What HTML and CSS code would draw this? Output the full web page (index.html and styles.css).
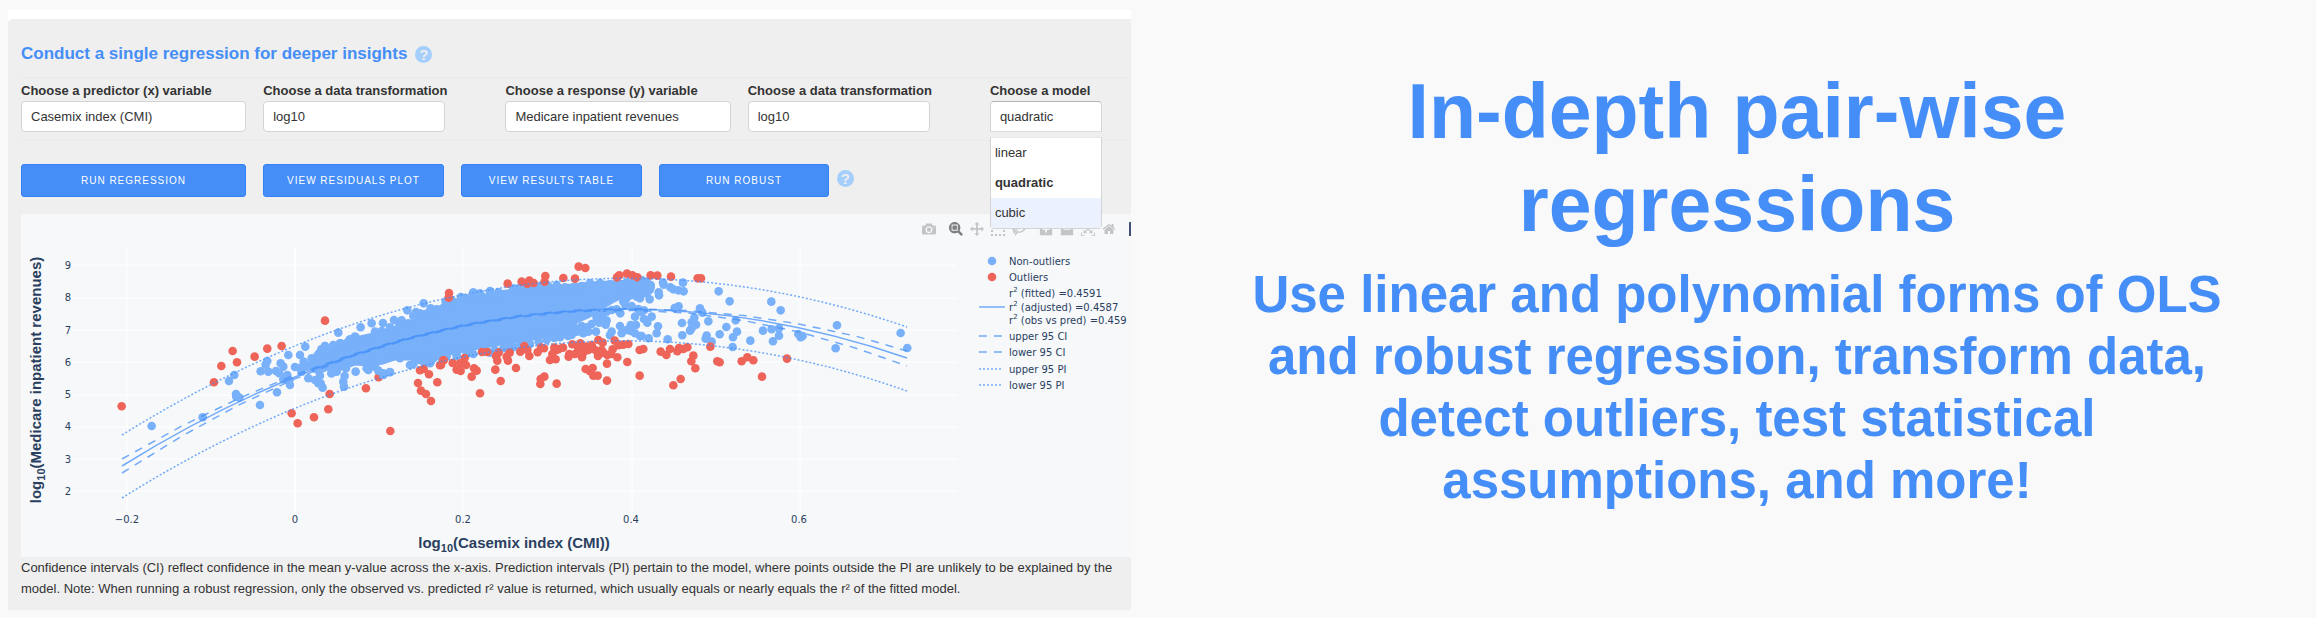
FILE: index.html
```html
<!DOCTYPE html>
<html lang="en">
<head>
<meta charset="utf-8">
<title>In-depth pair-wise regressions</title>
<link rel="stylesheet" href="styles.css">
</head>
<body>
<main class="split">
  <div class="demo">
    <section class="panel">
      <h2 class="panel-title">Conduct a single regression for deeper insights <button class="help" type="button" aria-label="Help">?</button></h2>
      <form class="fields">
        <div class="pair">
          <div class="field">
            <label for="xvar">Choose a predictor (x) variable</label>
            <select id="xvar"><option>Casemix index (CMI)</option></select>
          </div>
          <div class="field">
            <label for="xtrans">Choose a data transformation</label>
            <select id="xtrans"><option>log10</option></select>
          </div>
        </div>
        <div class="pair">
          <div class="field">
            <label for="yvar">Choose a response (y) variable</label>
            <select id="yvar"><option>Medicare inpatient revenues</option></select>
          </div>
          <div class="field">
            <label for="ytrans">Choose a data transformation</label>
            <select id="ytrans"><option>log10</option></select>
          </div>
        </div>
        <div class="field model">
          <label for="model">Choose a model</label>
          <select id="model" class="open"><option>quadratic</option></select>
          <ul class="menu" role="listbox" aria-label="Models">
            <li role="option">linear</li>
            <li role="option" class="chosen" aria-selected="true">quadratic</li>
            <li role="option" class="hover">cubic</li>
          </ul>
        </div>
      </form>
      <div class="actions">
        <button class="btn" type="button">Run regression</button>
        <button class="btn" type="button">View residuals plot</button>
        <button class="btn" type="button">View results table</button>
        <div class="last">
          <button class="btn" type="button">Run robust</button>
          <button class="help" type="button" aria-label="Help">?</button>
        </div>
      </div>
      <div class="chart">
        <div class="modebar">
          <div class="tools"><svg viewBox="0 0 1000 1000"><path transform="matrix(1 0 0 -1 0 850)" d="m500 450c-83 0-150-67-150-150 0-83 67-150 150-150 83 0 150 67 150 150 0 83-67 150-150 150z m400 150h-120c-16 0-34 13-39 29l-31 93c-6 15-23 28-40 28h-340c-16 0-34-13-39-28l-31-94c-6-15-23-28-40-28h-120c-55 0-100-45-100-100v-450c0-55 45-100 100-100h800c55 0 100 45 100 100v450c0 55-45 100-100 100z m-400-550c-138 0-250 112-250 250 0 138 112 250 250 250 138 0 250-112 250-250 0-138-112-250-250-250z m365 380c-19 0-35 16-35 35 0 19 16 35 35 35 19 0 35-16 35-35 0-19-16-35-35-35z"/></svg></div>
          <div class="tools">
            <svg class="active" viewBox="0 0 1000 1000"><path transform="matrix(1 0 0 -1 0 850)" d="m1000-25l-250 251c40 63 63 138 63 218 0 224-182 406-407 406-224 0-406-182-406-406s183-406 407-406c80 0 155 22 218 62l250-250 125 125z m-812 250l0 438 437 0 0-438-437 0z m62 375l313 0 0-312-313 0 0 312z"/></svg>
            <svg viewBox="0 0 1000 1000"><path transform="matrix(1 0 0 -1 0 850)" d="m1000 350l-187 188 0-125-250 0 0 250 125 0-188 187-187-187 125 0 0-250-250 0 0 125-188-188 186-187 0 125 252 0 0-250-125 0 187-188 188 188-125 0 0 250 250 0 0-126 187 188z"/></svg>
            <svg viewBox="0 0 1000 1000"><path transform="matrix(1 0 0 -1 0 850)" d="m0 850l0-143 143 0 0 143-143 0z m286 0l0-143 143 0 0 143-143 0z m285 0l0-143 143 0 0 143-143 0z m286 0l0-143 143 0 0 143-143 0z m-857-286l0-143 143 0 0 143-143 0z m857 0l0-143 143 0 0 143-143 0z m-857-285l0-143 143 0 0 143-143 0z m857 0l0-143 143 0 0 143-143 0z m-857-286l0-143 143 0 0 143-143 0z m286 0l0-143 143 0 0 143-143 0z m285 0l0-143 143 0 0 143-143 0z m286 0l0-143 143 0 0 143-143 0z"/></svg>
            <svg viewBox="0 0 1031 1000"><path transform="matrix(1 0 0 -1 0 850)" d="m1018 538c-36 207-290 336-568 286-277-48-473-256-436-463 10-57 36-108 76-151-13-66 11-137 68-183 34-28 75-41 114-42l-55-70 0 0c-2-1-3-2-4-3-10-14-8-34 5-45 14-11 34-8 45 4 1 1 2 3 2 5l0 0 113 140c16 11 31 24 45 40 4 3 6 7 8 11 48-3 100 0 151 9 278 48 473 255 436 462z m-624-379c-80 14-149 48-197 96 42 42 109 47 156 9 33-26 47-66 41-105z m-187-74c-19 16-33 37-39 60 50-32 109-55 174-68-42-25-95-24-135 8z m360 75c-34-7-69-9-102-8 8 62-16 128-68 170-73 59-175 54-244-5-9 20-16 40-20 61-28 159 121 317 333 354s407-60 434-217c28-159-121-318-333-355z"/></svg>
          </div>
          <div class="tools">
            <svg viewBox="0 0 875 1000"><path transform="matrix(1 0 0 -1 0 850)" d="m1 787l0-875 875 0 0 875-875 0z m687-500l-187 0 0-187-125 0 0 187-188 0 0 125 188 0 0 187 125 0 0-187 187 0 0-125z"/></svg>
            <svg viewBox="0 0 875 1000"><path transform="matrix(1 0 0 -1 0 850)" d="m0 788l0-876 875 0 0 876-875 0z m688-500l-500 0 0 125 500 0 0-125z"/></svg>
            <svg viewBox="0 0 1000 1000"><path transform="matrix(1 0 0 -1 0 850)" d="m250 850l-187 0-63 0 0-62 0-188 63 0 0 188 187 0 0 62z m688 0l-188 0 0-62 188 0 0-188 62 0 0 188 0 62-62 0z m-875-938l0 188-63 0 0-188 0-62 63 0 187 0 0 62-187 0z m875 188l0-188-188 0 0-62 188 0 62 0 0 62 0 188-62 0z m-125 188l-1 0-93-94-156 156 156 156 92-93 2 0 0 250-250 0 0-2 93-92-156-156-156 156 94 92 0 2-250 0 0-250 0 0 93 93 157-156-157-156-93 94 0 0 0-250 250 0 0 0-94 93 156 157 156-157-93-93 0 0 250 0 0 250z"/></svg>
            <svg viewBox="0 0 929 1000"><path transform="matrix(1 0 0 -1 0 850)" d="m786 296v-267q0-15-11-26t-25-10h-214v214h-143v-214h-214q-15 0-25 10t-11 26v267q0 1 0 2t0 2l321 264 321-264q1-1 1-4z m124 39l-34-41q-5-5-12-6h-2q-7 0-12 3l-386 322-386-322q-7-4-13-4-7 2-12 7l-35 41q-4 5-3 13t6 12l401 334q18 15 42 15t43-15l136-114v109q0 8 5 13t13 5h107q8 0 13-5t5-13v-227l122-102q5-5 6-12t-4-13z"/></svg>
          </div>
          <div class="tools"><svg viewBox="0 0 132 132"><rect width="132" height="132" rx="8" fill="#3f4f75"/><circle cx="30" cy="30" r="9" fill="#80cfbe"/><rect x="20" y="54" width="14" height="58" rx="6" fill="#fff"/></svg></div>
        </div>
        <svg class="plot" viewBox="21 214 1110 343" role="img" aria-label="Scatter plot with quadratic fit">
          <defs>
            <marker id="dot" viewBox="-5 -5 10 10" markerWidth="30" markerHeight="30" markerUnits="userSpaceOnUse"><circle r="4.3" fill="#78b0fa"/></marker>
            <marker id="out" viewBox="-5 -5 10 10" markerWidth="30" markerHeight="30" markerUnits="userSpaceOnUse"><circle r="4.3" fill="#ef6459"/></marker>
          </defs>
          <path class="grid" d="M74 265h883M74 298h883M74 330h883M74 362h883M74 395h883M74 427h883M74 459h883M74 491h883M127 248v264M463 248v264M632 248v264M800 248v264"/>
          <path class="grid zero" d="M295 248v264"/>
          <path class="cloud" d="M318 352L328 350 345 346 360 338 374 335 396 328 412 322 423 313 440 308 450 302 473 298 507 292 540 288 573 286 590 284 610 283 630 282 645 283 650 288 646 292 630 297 620 297 612 301 605 305 598 309 588 316 574 322 569 332 556 334 543 336 523 340 505 342 490 345 463 350 440 355 427 359 410 358 395 358 383 362 370 364 355 363 342 368 330 367 318 372 308 366Z"/>
          <g class="dots" transform="translate(0 220) scale(.3333)">
            <polyline class="in" points="455,618 608,592 708,522 709,530 718,533 687,483 703,465 780,555 831,517 865,405 916,380 900,405 885,441 899,444 1015,338 1082,322 1115,310 1149,309 1067,455 968,503 962,490 960,467 1032,500 1030,485 1034,468 1170,457 782,454 802,423 797,434 805,455 842,430 850,440 828,453 838,460 862,465 850,478 870,495 868,480 935,415 975,378 911,425 905,455 925,475 945,480 955,490 920,440 932,435 955,405 965,395 1000,375 1022,370 1040,370 1065,350 1050,358 995,460 1010,450 1100,445 1105,450 1150,460"/>
            <polyline class="red" points="365,559 642,487 664,438 698,393 711,427 764,410 802,386 845,378 975,302 875,580 893,610 942,592 985,568 989,522 1098,505 1136,472 1171,633"/>
          </g>
          <g class="dots" transform="translate(240 250) scale(.3333)">
            <polyline class="in" points="502,181 528,186 520,198 551,160 572,175 590,178 617,155 635,150 663,141 680,145 700,128 462,210 485,211 478,222 505,220 405,245 425,243 450,232 540,190 347,262 355,275 380,275 325,275 255,288 244,298 282,290 268,330 300,280 385,358 405,350 450,366 430,375 415,362 480,325 510,345 520,342 535,330 550,335 570,340 580,325 600,320 620,318 650,312 274,370 290,365 318,355"/>
            <polyline class="red" points="534,399 540,361 551,357 567,373 592,397 543,422 558,432 573,453 600,346 611,331"/>
          </g>
          <g class="dots" transform="translate(440 250) scale(.3333)">
            <polyline class="in" points="100,128 120,130 150,123 175,127 185,132 220,115 240,113 260,112 285,108 305,106 325,108 350,105 375,112 400,112 425,108 450,100 480,99 510,103 540,102 560,98 580,95 605,90 620,95 632,105 575,130 560,145 590,140 600,145 629,120 620,130 550,155 541,190 556,165 575,168 595,177 602,185 585,200 486,198 470,205 500,212 497,224 478,218 468,245 515,245 510,256 540,228 545,250 560,240 572,225 572,243 588,225 585,250 600,258 475,195 455,222 440,232 425,228 405,235 400,218 390,230 412,245 430,250 445,245 395,255 384,258 360,262 343,264 320,270 296,275 270,282 240,278 245,292 220,292 205,285 190,295 165,300 150,308 130,305 100,312 80,312 50,318 460,188 500,185 515,180 530,178 390,210 380,240"/>
            <polyline class="red" points="26,143 27,129 203,101 245,95 262,101 268,92 281,99 316,78 314,95 370,84 405,86 416,50 436,54 531,82 538,76 561,71 577,76 592,82"/>
            <polyline class="red" points="3,345 10,331 38,339 50,359 60,340 74,324 62,363 78,345 95,380 102,355 110,362 120,430 126,306 142,306 166,359 182,393 172,332 168,318 176,308 204,332 209,308 200,320 228,354 241,305 253,288 268,318 262,300 293,307 303,293 312,295 330,330 347,328 343,293 350,300 337,312 357,297 369,293 301,402 302,387 313,380 350,401 386,320 397,283 388,312 405,312 421,280 415,295 426,322 430,308 438,290 445,300 455,285 462,298 475,270 488,278 474,318 470,303 485,300 490,308 502,315 513,312 524,272 518,298 532,322 536,286 550,284 565,282 501,341 501,392 562,336 437,357 458,354 450,364 460,377 473,377 599,300 599,377"/>
          </g>
          <g class="dots" transform="translate(640 250) scale(.3333)">
            <polyline class="in" points="8,100 20,108 32,112 10,130 25,118 236,124 269,154 394,155 422,181 591,226 782,249 802,294 587,295 475,252 482,262 488,258 399,274 417,257 395,238 417,235 369,242 331,272 291,245 287,211 279,262 278,291 259,231 239,253 205,214 200,257 215,275 197,266 127,256 126,219 150,242 155,217 168,224 163,203 155,235 187,188 180,175 116,169 104,174 129,98 131,124 115,121 100,118 91,112 69,98 71,104 56,127 57,136 29,148 54,229 50,250 35,200 12,181 22,218 12,207 83,268 26,265 5,258"/>
            <polyline class="red" points="32,76 52,77 93,80 173,85 183,85 10,297 62,305 79,315 90,297 112,304 117,294 130,297 142,292 160,317 154,334 166,355 122,387 100,406 211,290 232,334 239,337 305,334 322,322 340,331 366,380 441,326"/>
          </g>
          <g class="fit">
            <path d="M122 466Q514.500 222 907 358"/>
            <path class="dash" d="M122 459L183 425.400 239 398.300 295 374.800 351 354.800 407 338 463 324.800 519 315.500 576 310 632 308.500 688 310.600 744 315.600 800 324.200 856 336.200 907 351"/>
            <path class="dash" d="M122 473L183 435.400 239 404.900 295 378.800 351 356.800 407 339.600 463 326.400 519 317.100 576 311.700 632 310.300 688 313 744 320.600 800 332.200 856 348.200 907 366"/>
            <path class="dotted" d="M122 435Q514.500 191 907 327"/>
            <path class="dotted" d="M122 498Q514.500 252 907 391"/>
          </g>
          <g class="ticks">
            <g text-anchor="end"><text x="71" y="269">9</text><text x="71" y="301">8</text><text x="71" y="334">7</text><text x="71" y="366">6</text><text x="71" y="398">5</text><text x="71" y="430">4</text><text x="71" y="463">3</text><text x="71" y="495">2</text></g>
            <g text-anchor="middle"><text x="127" y="523">−0.2</text><text x="295" y="523">0</text><text x="463" y="523">0.2</text><text x="631" y="523">0.4</text><text x="799" y="523">0.6</text></g>
          </g>
          <text class="axis" x="514" y="548" text-anchor="middle">log<tspan class="sub" dy="4">10</tspan><tspan dy="-4">(Casemix index (CMI))</tspan></text>
          <text class="axis" transform="translate(41 380) rotate(-90)" text-anchor="middle">log<tspan class="sub" dy="4">10</tspan><tspan dy="-4">(Medicare inpatient revenues)</tspan></text>
          <circle cx="992" cy="261" r="4.300" fill="#78b0fa"/>
          <circle cx="992" cy="277" r="4.300" fill="#ef6459"/>
          <g class="fit"><path d="M979 307h26"/><path class="dash" d="M979 336h26M979 352h26"/><path class="dotted" d="M979 369h24M979 385h24"/></g>
          <g class="ticks">
            <text x="1009" y="265">Non-outliers</text>
            <text x="1009" y="281">Outliers</text>
            <text x="1009" y="297">r<tspan class="sup" dy="-5">2</tspan><tspan dy="5"> (fitted) =0.4591</tspan></text>
            <text x="1009" y="311">r<tspan class="sup" dy="-5">2</tspan><tspan dy="5"> (adjusted) =0.4587</tspan></text>
            <text x="1009" y="324">r<tspan class="sup" dy="-5">2</tspan><tspan dy="5"> (obs vs pred) =0.459</tspan></text>
            <text x="1009" y="340">upper 95 CI</text>
            <text x="1009" y="356">lower 95 CI</text>
            <text x="1009" y="373">upper 95 PI</text>
            <text x="1009" y="389">lower 95 PI</text>
          </g>
        </svg>
      </div>
      <p class="note">Confidence intervals (CI) reflect confidence in the mean y-value across the x-axis. Prediction intervals (PI) pertain to the model, where points outside the PI are unlikely to be explained by the model. Note: When running a robust regression, only the observed vs. predicted r² value is returned, which usually equals or nearly equals the r² of the fitted model.</p>
    </section>
  </div>
  <div class="pitch">
    <h1>In-depth pair-wise regressions</h1>
    <p>Use linear and polynomial forms of OLS and robust regression, transform data, detect outliers, test statistical assumptions, and more!</p>
  </div>
</main>
</body>
</html>
```
FILE: styles.css
```css
* { box-sizing: border-box; }
body {
  margin: 0;
  background: #f9f9f9;
  color: #333;
  font: 13px/18px "Liberation Sans", Arial, sans-serif;
}
button, select { font: inherit; color: inherit; }
.split { display: grid; grid-template-columns: 1fr 1fr; }
.demo {
  margin: 10px 27px 8px 8px;
  padding-top: 9px;
  background: #fff;
  min-width: 0;
}
.panel {
  background: #efefef;
  border-radius: 5px 0 0 0;
  padding: 23px 0 11px 13px;
  overflow: hidden;
}
.panel-title {
  display: flex;
  align-items: center;
  gap: 8px;
  margin: 0 0 11px;
  color: #458ef8;
  font-size: 17px;
  line-height: 24px;
}
.help {
  width: 17px;
  height: 17px;
  padding: 0;
  border: 0;
  border-radius: 50%;
  background: #a4cefc;
  color: #efefef;
  font-size: 15px;
  font-weight: bold;
  line-height: 17px;
  text-align: center;
}
.fields {
  display: flex;
  gap: 60px;
  padding: 4px 29px 8px 0;
  border: solid #eaeaea;
  border-width: 1px 0;
}
.pair {
  flex: 424 1 0;
  display: grid;
  grid-template-columns: 225fr 182fr;
  gap: 17px;
}
.field { display: flex; flex-direction: column; min-width: 0; }
.field label { font-weight: bold; white-space: nowrap; margin-bottom: 1px; }
.field select {
  appearance: none;
  width: 100%;
  height: 31px;
  padding: 0 9px;
  border: 1px solid #d4d4d4;
  border-radius: 4px;
  background: #fff;
}
.model { flex: 112 1 0; position: relative; }
.field select.open { border-color: #b3b3b3 #d4d4d4 #ddd; border-radius: 4px 4px 0 0; }
.menu {
  position: absolute;
  z-index: 2;
  top: 100%;
  left: 0;
  right: 0;
  margin: 5px 0 0;
  padding: 0;
  list-style: none;
  background: #fff;
  border: 1px solid #d4d4d4;
  border-top-color: #e8e8e8;
  border-radius: 0 0 4px 4px;
}
.menu li { padding: 6px 4px; }
.menu .chosen { font-weight: bold; }
.menu .hover { background: #ebf1fd; }
.actions {
  display: grid;
  grid-template-columns: 225fr 181fr 181fr 472fr;
  gap: 17px;
  margin: 23px 0 17px;
}
.last { display: flex; align-items: center; gap: 8px; }
.last .btn { width: 36%; }
.last .help { margin-bottom: 4px; }
.btn {
  height: 33px;
  padding: 0;
  border: 1px solid #3480f7;
  border-radius: 3px;
  background: #458ef8;
  color: #fff;
  font-size: 10px;
  letter-spacing: 1px;
  text-transform: uppercase;
}
.chart { position: relative; background: #f6f8fa; overflow: hidden; }
.plot { display: block; width: 100%; height: auto; }
.modebar {
  position: absolute;
  top: 8px;
  right: -12px;
  display: flex;
  gap: 13px;
}
.tools { display: flex; gap: 7px; }
.tools svg { width: 14px; height: 14px; fill: #c3c4c6; }
.tools .active { fill: #7e7f80; }
.grid { stroke: #fff; stroke-width: 1; fill: none; }
.zero { stroke-width: 2; }
.cloud { fill: #78b0fa; stroke: #78b0fa; stroke-width: 5; stroke-linejoin: round; }
.dots polyline { fill: none; stroke: none; }
.in { marker: url(#dot); }
.red { marker: url(#out); }
.fit path { fill: none; stroke: #4590f8; stroke-opacity: .75; stroke-width: 1.5; }
.fit .dash { stroke-dasharray: 8 7; }
.fit .dotted { stroke-dasharray: 2 2; }
.ticks { fill: #2a3f5f; font: 10px "DejaVu Sans", Verdana, sans-serif; }
.axis { fill: #2a3f5f; font: bold 15px "Liberation Sans", Arial, sans-serif; }
.sub { font-size: 11px; }
.sup { font-size: 7px; }
.note { margin: 0; padding-right: 13px; line-height: 21px; }
.pitch {
  padding: 65px 56px 0;
  color: #458ef8;
  font-weight: bold;
  text-align: center;
}
.pitch h1 { margin: 0 0 13px; font-size: 77px; line-height: 93px; }
.pitch p { margin: 0; font-size: 51px; line-height: 62px; }
```
